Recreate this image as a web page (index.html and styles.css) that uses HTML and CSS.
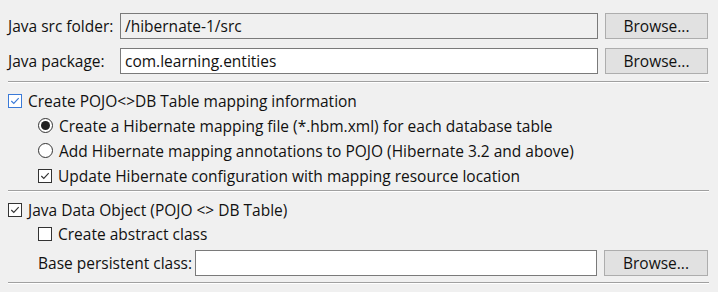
FILE: index.html
```html
<!DOCTYPE html>
<html>
<head>
<meta charset="utf-8">
<link rel="stylesheet" href="styles.css">
</head>
<body>
<div class="page">
  <div class="grid">
    <span class="label">Java src folder:</span>
    <div class="field readonly">/hibernate-1/src</div>
    <div class="btn">Browse...</div>
    <span class="label">Java package:</span>
    <div class="field">com.learning.entities</div>
    <div class="btn">Browse...</div>
  </div>
  <div class="sep"></div>
  <div class="group g1">
    <div class="row"><span class="cb checked focus"><svg viewBox="0 0 13 13"><path d="M2.5 6.5 L5.2 9.2 L10.5 3.5" fill="none" stroke="#333" stroke-width="1.2"/></svg></span>Create POJO&lt;&gt;DB Table mapping information</div>
    <div class="row indent"><span class="radio on"></span>Create a Hibernate mapping file (*.hbm.xml) for each database table</div>
    <div class="row indent"><span class="radio"></span>Add Hibernate mapping annotations to POJO (Hibernate 3.2 and above)</div>
    <div class="row indent"><span class="cb checked"><svg viewBox="0 0 13 13"><path d="M2.5 6.5 L5.2 9.2 L10.5 3.5" fill="none" stroke="#333" stroke-width="1.2"/></svg></span>Update Hibernate configuration with mapping resource location</div>
  </div>
  <div class="sep"></div>
  <div class="group g2">
    <div class="row"><span class="cb checked"><svg viewBox="0 0 13 13"><path d="M2.5 6.5 L5.2 9.2 L10.5 3.5" fill="none" stroke="#333" stroke-width="1.2"/></svg></span>Java Data Object (POJO &lt;&gt; DB Table)</div>
    <div class="row indent"><span class="cb"></span>Create abstract class</div>
    <div class="frow indent">
      <span class="label">Base persistent class:</span>
      <div class="field"></div>
      <div class="btn">Browse...</div>
    </div>
  </div>
  <div class="sep"></div>
</div>
</body>
</html>
```
FILE: styles.css
```css
html, body {
  margin: 0;
  padding: 0;
  background: #f0f0f0;
}
body {
  font-family: "Open Sans", "Noto Sans", sans-serif;
  font-size: 15.5px;
  color: #111;
  width: 718px;
  height: 292px;
  overflow: hidden;
}
.page {
  padding: 13px 9px 0 8px;
}
.grid {
  display: grid;
  grid-template-columns: 105px 1fr 104px;
  column-gap: 7px;
  row-gap: 9px;
  align-items: center;
}
.label {
  white-space: nowrap;
  line-height: 20px;
}
.field {
  box-sizing: border-box;
  height: 26px;
  border: 1px solid #7a7a7a;
  background: #fff;
  padding: 0 4px;
  line-height: 24px;
  white-space: nowrap;
  overflow: hidden;
}
.field.readonly {
  background: #f0f0f0;
}
.btn {
  box-sizing: border-box;
  height: 26px;
  margin-right: 1px;
  border: 1px solid #adadad;
  background: #e1e1e1;
  text-align: center;
  line-height: 24px;
}
.sep {
  height: 1px;
  background: #a0a0a0;
  border-bottom: 1px solid #fff;
}
.grid + .sep {
  margin-top: 7px;
}
.group {
  display: flex;
  flex-direction: column;
}
.g1 {
  padding: 5px 0 2px;
}
.g2 {
  padding: 6px 0 6px;
}
.row {
  display: flex;
  align-items: center;
  height: 25px;
  white-space: nowrap;
}
.g2 .row {
  height: 24px;
}
.indent {
  padding-left: 30px;
}
.cb {
  box-sizing: border-box;
  width: 14px;
  height: 14px;
  border: 1px solid #333;
  background: #fff;
  margin-right: 6px;
  display: inline-flex;
  flex: none;
}
.cb.focus {
  border-color: #3a7ad8;
}
.cb svg {
  width: 12px;
  height: 12px;
}
.cb.focus svg path {
  stroke: #3a7ad8;
}
.radio {
  box-sizing: border-box;
  width: 15px;
  height: 15px;
  border: 1px solid #333;
  border-radius: 50%;
  background: #fff;
  margin-right: 6px;
  flex: none;
  display: inline-flex;
  align-items: center;
  justify-content: center;
}
.radio.on::after {
  content: "";
  width: 9px;
  height: 9px;
  border-radius: 50%;
  background: #222;
}
.frow {
  display: flex;
  align-items: center;
  gap: 7px;
  margin-top: 4px;
}
.frow .label {
  margin-right: -4px;
}
.frow .field {
  flex: 1;
}
.frow .btn {
  width: 104px;
  flex: none;
}
```
